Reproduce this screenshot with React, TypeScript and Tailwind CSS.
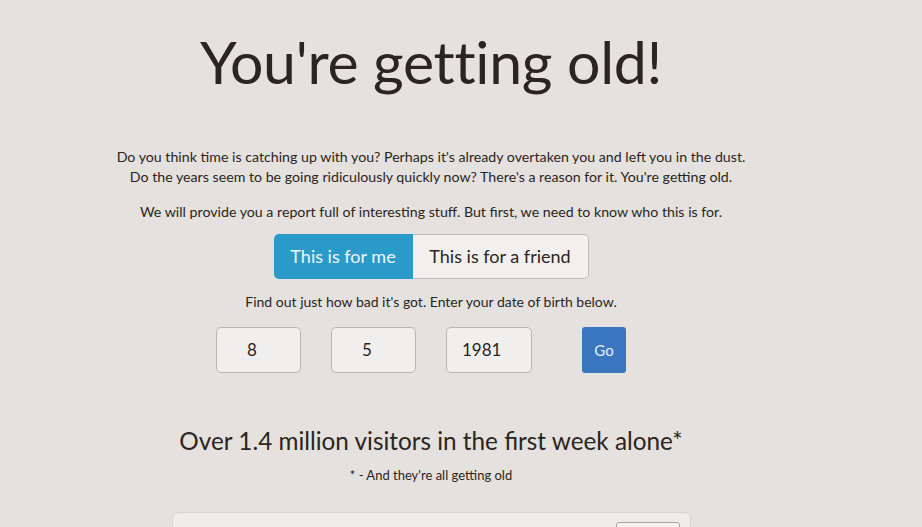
export default function App() {
  return (
    <div className="min-h-[527px] w-full overflow-hidden bg-[#e4e1de] font-['Lato',sans-serif] text-[#2b2521]">
      <div className="flex w-[862px] flex-col items-center">
        <h1 className="mt-[26px] text-[59px] leading-[72px] font-normal tracking-[-0.3px]">You're getting old!</h1>

        <div className="mt-[49px] text-center text-[14.2px] leading-[20px]">
          <p>Do you think time is catching up with you? Perhaps it's already overtaken you and left you in the dust.</p>
          <p>Do the years seem to be going ridiculously quickly now? There's a reason for it. You're getting old.</p>
        </div>

        <p className="mt-[15px] text-[14.2px] leading-[20px]">
          We will provide you a report full of interesting stuff. But first, we need to know who this is for.
        </p>

        <div className="mt-[12px] flex h-[45px] text-[18px]">
          <button className="w-[139px] rounded-l-[5px] bg-[#2a9bc9] text-[#eef6fa]">This is for me</button>
          <button className="w-[176px] rounded-r-[5px] border border-l-0 border-[#bdb9b5] bg-[#f2f0ee] text-[#2b2521]">
            This is for a friend
          </button>
        </div>

        <p className="mt-[13px] text-[14px] leading-[20px]">Find out just how bad it's got. Enter your date of birth below.</p>

        <div className="mt-[15px] mr-[20px] flex items-center">
          <div className="flex h-[46px] w-[85px] items-center rounded-[5px] border border-[#b9b5b1] bg-[#f1efed] pl-[30px] text-[17px]">8</div>
          <div className="ml-[30px] flex h-[46px] w-[85px] items-center rounded-[5px] border border-[#b9b5b1] bg-[#f1efed] pl-[30px] text-[17px]">5</div>
          <div className="ml-[30px] flex h-[46px] w-[86px] items-center rounded-[5px] border border-[#b9b5b1] bg-[#f1efed] pl-[15px] text-[17px]">1981</div>
          <button className="ml-[50px] h-[46px] w-[44px] rounded-[3px] bg-[#3a76bf] text-[15px] text-[#e8eef7]">Go</button>
        </div>

        <h2 className="mt-[53px] text-[24.3px] leading-[30px] font-normal">Over 1.4 million visitors in the first week alone*</h2>
        <p className="mt-[10px] text-[13px] leading-[18px]">* - And they're all getting old</p>

        <div className="mt-[28px] flex h-[40px] w-[519px] justify-end rounded-t-[6px] border border-[#d8d4d0] bg-[#efedeb] pr-[10px] pt-[9px]">
          <div className="h-[30px] w-[64px] rounded-[3px] border border-[#a9a5a1] bg-[#f4f2f0]" />
        </div>
      </div>
    </div>
  );
}
